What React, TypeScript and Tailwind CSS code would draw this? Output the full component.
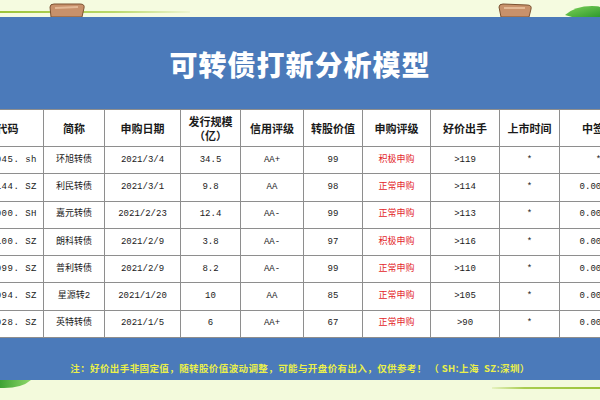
import React from 'react'

type Row = {
  code: string
  name: string
  date: string
  size: string
  rating: string
  value: string
  level: string
  price: string
  list: string
  rate: string
}

const rows: Row[] = [
  { code: '113045. sh', name: '环旭转债', date: '2021/3/4', size: '34.5', rating: 'AA+', value: '99', level: '积极申购', price: '>119', list: '*', rate: '*' },
  { code: '128144. SZ', name: '利民转债', date: '2021/3/1', size: '9.8', rating: 'AA', value: '98', level: '正常申购', price: '>114', list: '*', rate: '0.0013%' },
  { code: '118000. SH', name: '嘉元转债', date: '2021/2/23', size: '12.4', rating: 'AA-', value: '99', level: '正常申购', price: '>113', list: '*', rate: '0.0025%' },
  { code: '123100. SZ', name: '朗科转债', date: '2021/2/9', size: '3.8', rating: 'AA-', value: '97', level: '积极申购', price: '>116', list: '*', rate: '0.0009%' },
  { code: '123099. SZ', name: '普利转债', date: '2021/2/9', size: '8.2', rating: 'AA-', value: '99', level: '正常申购', price: '>110', list: '*', rate: '0.0018%' },
  { code: '123094. SZ', name: '星源转2', date: '2021/1/20', size: '10', rating: 'AA', value: '85', level: '正常申购', price: '>105', list: '*', rate: '0.0021%' },
  { code: '127028. SZ', name: '英特转债', date: '2021/1/5', size: '6', rating: 'AA+', value: '67', level: '正常申购', price: '>90', list: '*', rate: '0.0014%' },
]

const widths = [94, 61, 76, 60, 63, 59, 68, 69, 60, 78]

const cjk = { fontFamily: '"Noto Sans CJK SC", "Noto Sans", sans-serif' }
const mono = { fontFamily: '"Liberation Mono", "Noto Sans CJK SC", monospace' }

function Cell({ children, red, wide }: { children: React.ReactNode; red?: boolean; wide?: boolean }) {
  return (
    <td
      className={`h-[27.3px] whitespace-pre border border-[#8e8e8e] text-center text-[9px] leading-none ${red ? 'text-[#e3262a]' : 'text-[#1a1a1a]'} ${wide ? 'py-0 pl-[22px] pr-0 tracking-[0.5px]' : 'p-0'}`}
      style={mono}
    >
      {children}
    </td>
  )
}

function TopBand() {
  return (
    <svg width="600" height="17" viewBox="0 0 600 17" className="block">
      <defs>
        <linearGradient id="line" x1="0" x2="1">
          <stop offset="0" stopColor="#9cc43a" />
          <stop offset="0.6" stopColor="#b9d86a" />
          <stop offset="1" stopColor="#eef6d2" />
        </linearGradient>
        <linearGradient id="leaf" x1="0" x2="1" y1="0" y2="1">
          <stop offset="0" stopColor="#7fd35a" />
          <stop offset="1" stopColor="#2f9a2c" />
        </linearGradient>
      </defs>
      <rect width="600" height="17" fill="#f5fbe0" />
      <rect x="0" y="11" width="190" height="2" fill="url(#line)" />
      <path d="M51 17 L50 7 Q50 4 54 4 L80 4 Q85 4 84 8 L82 17 Z" fill="#c8916b" stroke="#7c5233" strokeWidth="1" />
      <path d="M55 8 L78 7" stroke="#e4b996" strokeWidth="2" />
      <path d="M501 17 L499 7 Q499 4 503 4 L527 5 Q532 5 531 9 L529 17 Z" fill="#c8916b" stroke="#7c5233" strokeWidth="1" />
      <path d="M504 8 L525 8" stroke="#e4b996" strokeWidth="2" />
      <path d="M565 15 Q575 6 592 6 Q598 6 600 7 L600 17 L572 17 Z" fill="url(#leaf)" />
    </svg>
  )
}

function BottomBand() {
  return (
    <svg width="600" height="20" viewBox="0 0 600 20" className="block">
      <defs>
        <linearGradient id="leaf2" x1="0" x2="1">
          <stop offset="0" stopColor="#3da234" />
          <stop offset="1" stopColor="#8fd86a" />
        </linearGradient>
        <linearGradient id="line2" x1="0" x2="1">
          <stop offset="0" stopColor="#e6f2c0" />
          <stop offset="0.3" stopColor="#a9cc50" />
          <stop offset="1" stopColor="#9cc43a" />
        </linearGradient>
      </defs>
      <rect width="600" height="20" fill="#f3fadc" />
      <path d="M0 0 L31 0 Q22 8 4 8 L0 8 Z" fill="url(#leaf2)" />
      <rect x="492" y="7" width="108" height="2" fill="url(#line2)" />
    </svg>
  )
}

export default function App() {
  return (
    <div className="h-[400px] w-[600px] overflow-hidden bg-[#f3fadc]">
      <TopBand />
      <div className="flex h-[363px] flex-col bg-[#4b7aba]">
        <div className="flex h-[92px] items-center justify-center pt-[1px]">
          <h1 className="text-[28px] font-black tracking-[1px] text-white" style={cjk}>
            可转债打新分析模型
          </h1>
        </div>
        <div className="overflow-hidden bg-[#4b7aba]">
          <table className="-ml-[51px] table-fixed border-collapse bg-white" style={{ width: 688 }}>
            <colgroup>
              {widths.map((w, i) => (
                <col key={i} style={{ width: w }} />
              ))}
            </colgroup>
            <thead>
              <tr>
                {['债券代码', '简称', '申购日期', '发行规模\n（亿）', '信用评级', '转股价值', '申购评级', '好价出手', '上市时间', '中签率'].map((h) => (
                  <th
                    key={h}
                    className="h-[37px] whitespace-pre-line border border-[#8e8e8e] p-0 text-center text-[11px] font-bold leading-[14px] text-[#1a1a1a]"
                    style={cjk}
                  >
                    {h}
                  </th>
                ))}
              </tr>
            </thead>
            <tbody>
              {rows.map((r) => (
                <tr key={r.code}>
                  <Cell wide>{r.code}</Cell>
                  <Cell>{r.name}</Cell>
                  <Cell>{r.date}</Cell>
                  <Cell>{r.size}</Cell>
                  <Cell>{r.rating}</Cell>
                  <Cell>{r.value}</Cell>
                  <Cell red>{r.level}</Cell>
                  <Cell>{r.price}</Cell>
                  <Cell>{r.list}</Cell>
                  <Cell>{r.rate}</Cell>
                </tr>
              ))}
            </tbody>
          </table>
        </div>
        <div className="flex flex-1 items-start justify-center pt-[23px]">
          <p className="text-[9.5px] font-bold tracking-[0.4px] text-[#eaf04a]" style={cjk}>
            注：好价出手非固定值，随转股价值波动调整，可能与开盘价有出入，仅供参考！ （ SH:上海&nbsp;&nbsp;SZ:深圳）
          </p>
        </div>
      </div>
      <BottomBand />
    </div>
  )
}
